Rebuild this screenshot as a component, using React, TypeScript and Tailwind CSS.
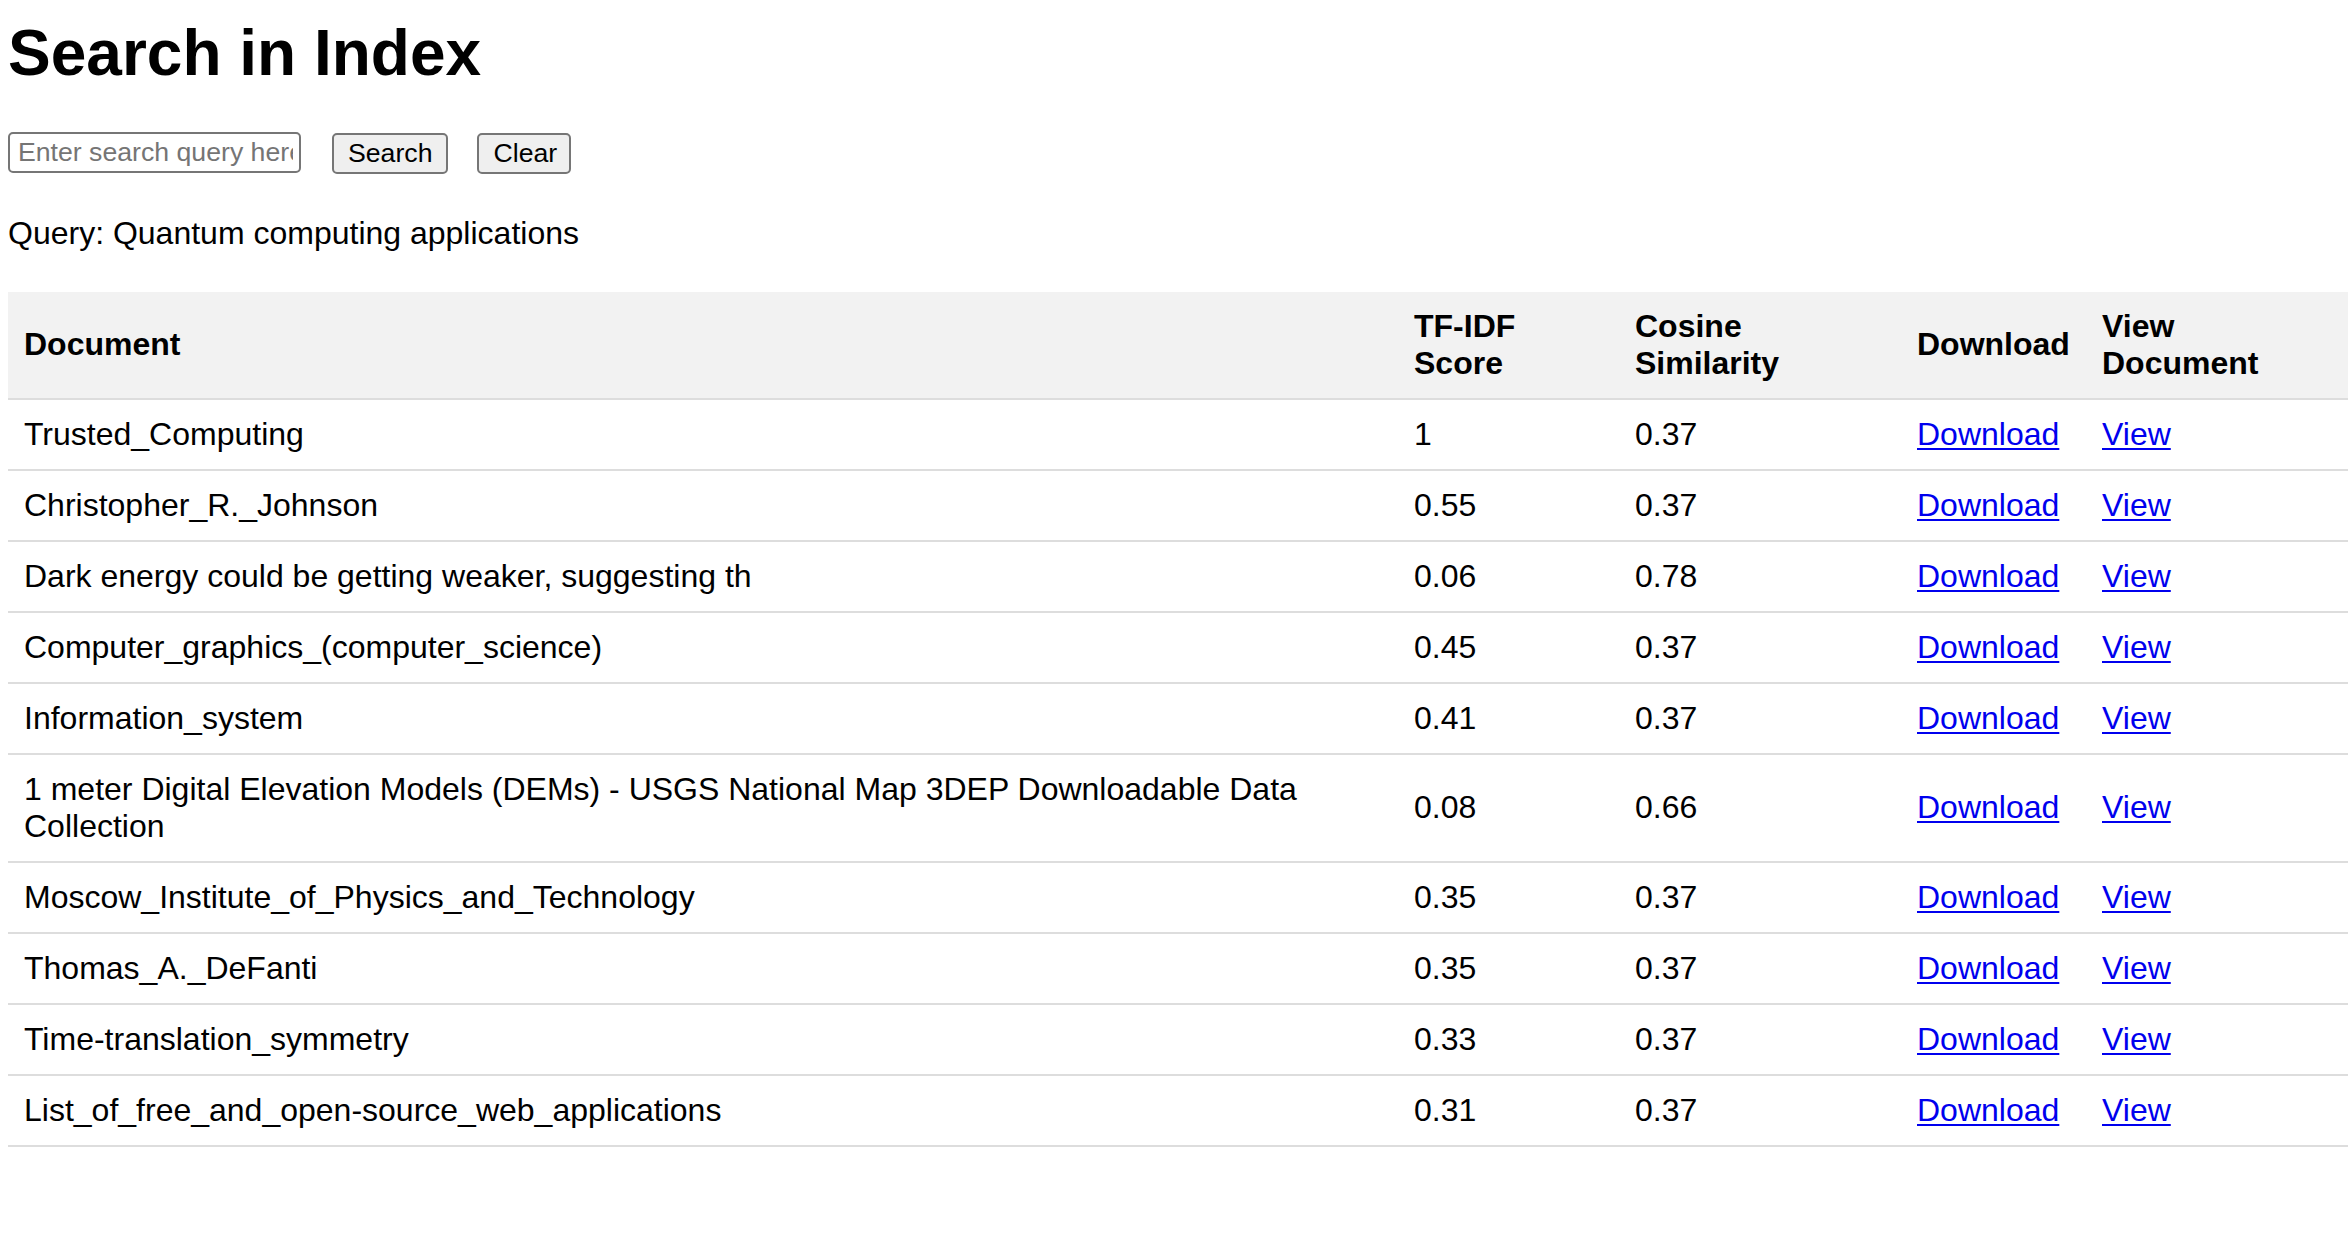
import React from "react";

const rows: { name: string; tfidf: string; cos: string }[] = [
  { name: "Trusted_Computing", tfidf: "1", cos: "0.37" },
  { name: "Christopher_R._Johnson", tfidf: "0.55", cos: "0.37" },
  { name: "Dark energy could be getting weaker, suggesting th", tfidf: "0.06", cos: "0.78" },
  { name: "Computer_graphics_(computer_science)", tfidf: "0.45", cos: "0.37" },
  { name: "Information_system", tfidf: "0.41", cos: "0.37" },
  {
    name: "1 meter Digital Elevation Models (DEMs) - USGS National Map 3DEP Downloadable Data Collection",
    tfidf: "0.08",
    cos: "0.66",
  },
  { name: "Moscow_Institute_of_Physics_and_Technology", tfidf: "0.35", cos: "0.37" },
  { name: "Thomas_A._DeFanti", tfidf: "0.35", cos: "0.37" },
  { name: "Time-translation_symmetry", tfidf: "0.33", cos: "0.37" },
  { name: "List_of_free_and_open-source_web_applications", tfidf: "0.31", cos: "0.37" },
];

export default function App() {
  const font = { fontFamily: '"Liberation Sans", Arial, Helvetica, sans-serif' };
  const th = "px-[16px] py-[16px] text-left font-bold leading-[36.8px] border-b-2 border-[#dddddd] align-middle";
  const td = "px-[16px] py-[16px] text-left leading-[37px] border-b-2 border-[#dddddd] align-middle";
  return (
    <div className="min-h-screen bg-white text-black pl-[8px] pt-[16px]" style={font}>
      <h1 className="text-[64px] leading-[74px] font-bold m-0">Search in Index</h1>
      <div className="mt-[42px] flex items-start h-[42px]">
        <input
          type="text"
          placeholder="Enter search query here"
          className="w-[293px] h-[41px] border-2 border-[#767676] rounded-[5px] pl-[8px] pr-[6px] text-[26.67px] leading-[31px] text-black placeholder:text-[#757575] bg-white outline-none"
          style={font}
        />
        <button
          className="ml-[31px] mt-[1px] h-[41px] px-[14px] border-2 border-[#767676] rounded-[5px] bg-[#efefef] text-[26.67px] leading-[31px] text-black"
          style={font}
        >
          Search
        </button>
        <button
          className="ml-[29px] mt-[1px] h-[41px] w-[94px] px-[14px] border-2 border-[#767676] rounded-[5px] bg-[#efefef] text-[26.67px] leading-[31px] text-black"
          style={font}
        >
          Clear
        </button>
      </div>
      <p className="mt-[41px] text-[32px] leading-[37px]">Query: Quantum computing applications</p>
      <table className="mt-[40px] w-full table-fixed border-collapse text-[32px]">
        <thead>
          <tr className="bg-[#f2f2f2]">
            <th className={`${th} w-[1390px]`}>Document</th>
            <th className={`${th} w-[221px]`}>TF-IDF Score</th>
            <th className={`${th} w-[282px]`}>Cosine Similarity</th>
            <th className={`${th} w-[185px]`}>Download</th>
            <th className={th}>View Document</th>
          </tr>
        </thead>
        <tbody>
          {rows.map((r, i) => (
            <tr key={i}>
              <td className={td}>{r.name}</td>
              <td className={td}>{r.tfidf}</td>
              <td className={td}>{r.cos}</td>
              <td className={td}>
                <a href="#" className="text-[#0000ee] underline decoration-2 underline-offset-[3px]">
                  Download
                </a>
              </td>
              <td className={td}>
                <a href="#" className="text-[#0000ee] underline decoration-2 underline-offset-[3px]">
                  View
                </a>
              </td>
            </tr>
          ))}
        </tbody>
      </table>
    </div>
  );
}
